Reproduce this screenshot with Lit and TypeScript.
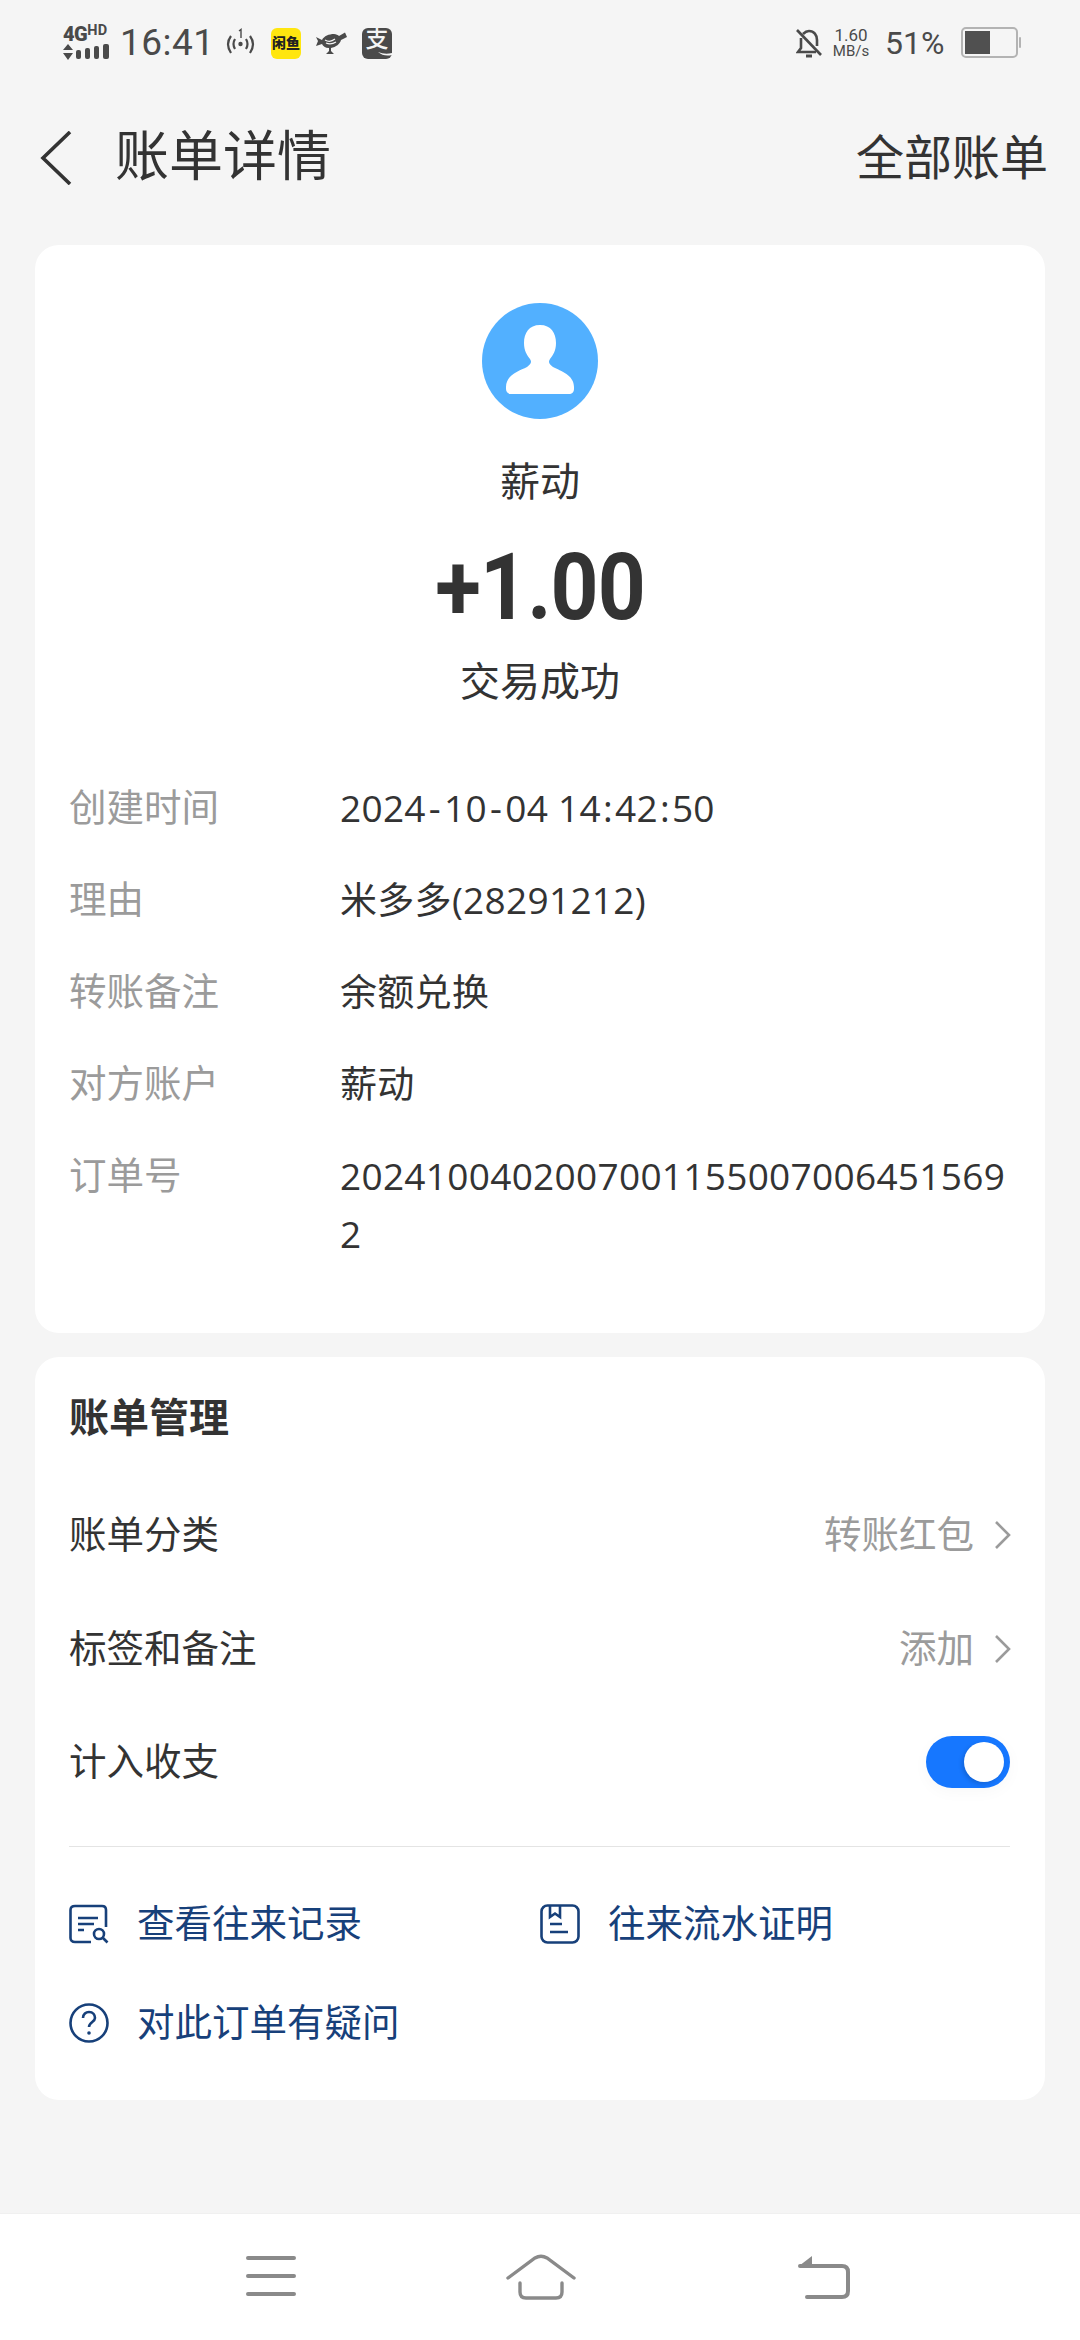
import { LitElement, html, css } from "lit";
import { customElement } from "lit/decorators.js";

const rows: [string, unknown][] = [
  ["创建时间", html`2024<span class="hy">-</span>10<span class="hy">-</span>04 14<span class="co">:</span>42<span class="co">:</span>50`],
  ["理由", "米多多(28291212)"],
  ["转账备注", "余额兑换"],
  ["对方账户", "薪动"],
  ["订单号", "20241004020070011550070064515692"],
];

const chevron = html`<svg class="chev" width="18" height="30" viewBox="0 0 18 30"><path d="M2 2 L15 15 L2 28" fill="none" stroke="#9b9b9b" stroke-width="2.6"/></svg>`;

@customElement("app-root")
export class AppRoot extends LitElement {
  static styles = css`
    :host { display: block; width: 1080px; height: 2340px; background: #f5f5f5; font-family: Roboto, "Noto Sans CJK SC", sans-serif; color: #333; overflow: hidden; }
    .page { display: flex; flex-direction: column; height: 2340px; }
    .status { height: 86px; display: flex; align-items: center; color: #4a4a4a; padding: 0 59px 0 63px; box-sizing: border-box; }
    .sigwrap { display: flex; flex-direction: column; width: 48px; height: 36px; margin-right: 9px; }
    .sigtop { display: flex; align-items: flex-start; height: 18px; line-height: 18px; font-weight: 700; color: #4a4a4a; }
    .sigtop b { font-size: 20px; letter-spacing: -0.5px; }
    .sigtop i { font-style: normal; font-size: 14.500px; line-height: 12px; font-weight: 700; letter-spacing: .3px; }
    .time { font-size: 37px; letter-spacing: 0.5px; width: 96px; line-height: 40px; }
    .wave { margin-left: 9px; }
    .yellow { margin-left: 15px; width: 30px; height: 31px; background: #ffe60f; border-radius: 6px; display: flex; align-items: center; justify-content: center; color: #222; font-size: 14px; line-height: 31px; font-weight: 900; white-space: nowrap; }
    .bird { margin-left: 15px; }
    .ali { position: relative; margin-left: 15px; width: 30px; height: 31px; background: #4a4a4a; border-radius: 6px; color: #f5f5f5; font-size: 23px; line-height: 24px; text-align: center; font-weight: 500; }
    .ali svg { position: absolute; left: 0; top: 0; }
    .grow { flex: 1; }
    .speed { display: flex; flex-direction: column; align-items: center; font-size: 15px; line-height: 15px; margin-left: 10px; width: 38px; }
    .speed .a { font-size: 17px; line-height: 17px; }
    .pct { font-size: 32px; margin-left: 15px; width: 64px; line-height: 34px; }
    .batt { margin-left: 12px; }
    .head { height: 159px; display: flex; align-items: flex-start; box-sizing: border-box; padding: 41px 32px 0 40px; }
    .head .back { margin-top: 4px; flex: none; }
    .head h1 { margin: 0 0 0 43px; font-size: 54px; line-height: 62px; font-weight: 400; color: #333; }
    .head .all { margin-left: auto; font-size: 48px; line-height: 62px; color: #333; margin-top: 1px; }
    .card { background: #fff; border-radius: 24px; margin: 0 35px; box-sizing: border-box; }
    .c1 { height: 1088px; padding: 58px 34px 0; }
    .avatar { display: block; margin: 0 auto; }
    .name { text-align: center; font-size: 40px; line-height: 50px; margin-top: 39px; color: #333; }
    .amtw { text-align: center; margin-top: 25px; line-height: 110px; height: 110px; }
    .amt { display: inline-block; font-size: 92px; line-height: 110px; font-weight: 700; color: #333; letter-spacing: -1px; transform: scaleX(.91); }
    .st { text-align: center; font-size: 40px; line-height: 50px; margin-top: 15px; color: #333; }
    .rows { margin-top: 71px; display: flex; flex-direction: column; gap: 34px; }
    .row { display: grid; grid-template-columns: 271px 670px; font-size: 37.500px; line-height: 58px; }
    .row .k { color: #9b9b9b; }
    .row .v { color: #333; word-break: break-all; font-family: "Open Sans", "Noto Sans CJK SC", sans-serif; font-size: 37px; letter-spacing: .3px; }
    .hy { margin: 0 3px; }
    .co { margin: 0 2px; }
    .c2 { margin-top: 24px; height: 743px; padding: 0 35px 0 34px; }
    .t2 { font-size: 40px; font-weight: 700; line-height: 60px; padding-top: 32px; color: #333; }
    .mrow { display: flex; align-items: center; justify-content: space-between; font-size: 37.500px; line-height: 58px; color: #333; }
    .mrow.r1 { margin-top: 57px; }
    .mrow.r2 { margin-top: 56px; }
    .mrow.r3 { margin-top: 55px; }
    .rt { display: flex; align-items: center; color: #9b9b9b; gap: 20px; margin-right: -2px; }
    .chev { display: block; }
    .sw { width: 84px; height: 52px; border-radius: 26px; background: #1677ff; display: flex; align-items: center; justify-content: flex-end; padding-right: 6px; box-sizing: border-box; box-shadow: 0 4px 16px rgba(0,0,0,.03); }
    .sw span { width: 40px; height: 40px; background: #fff; border-radius: 50%; box-shadow: -2px 2px 4px rgba(0,0,0,.15); }
    .div { height: 1px; background: #e4e4e4; margin-top: 55px; }
    .links { display: grid; grid-template-columns: 471px 1fr; row-gap: 41px; margin-top: 48px; }
    .lnk { display: flex; align-items: center; gap: 28px; font-size: 37.500px; line-height: 58px; color: #17407a; }
    .fill { flex: 1; }
    .nav { height: 127px; background: #fff; display: flex; align-items: flex-start; padding: 41px 0 0 246px; box-sizing: border-box; border-top: 1px solid #f0f0f0; }
    .nav .h { margin-left: 210px; margin-top: -1px; }
    .nav .b { margin-left: 222px; margin-top: -1px; }
  `;

  render() {
    return html`<div class="page">
      <div class="status">
        <div class="sigwrap">
          <div class="sigtop"><b>4G</b><i>HD</i></div>
          <svg width="48" height="18" viewBox="0 0 48 18" fill="#4a4a4a"><path d="M5 1 L10 7 H0 Z M5 17 L0 10 H10 Z"/><rect x="13" y="7" width="5" height="9" rx="2"/><rect x="22" y="5" width="5" height="11" rx="2"/><rect x="31" y="3" width="5" height="13" rx="2"/><rect x="40" y="1" width="6" height="15" rx="2"/></svg>
        </div>
        <div class="time">16:41</div>
        <svg class="wave" width="31" height="30" viewBox="0 0 31 30" fill="none" stroke="#4a4a4a" stroke-width="2.2"><path d="M6 8 Q0 16 6 25 M10 11 Q7 16 10 21 M25 8 Q31 16 25 25 M21 11 Q24 16 21 21"/><circle cx="15.500" cy="16" r="2.200" fill="#4a4a4a" stroke="none"/><path d="M14 3 L16 1.500 V10" stroke-width="1.400"/></svg>
        <div class="yellow">闲鱼</div>
        <svg class="bird" width="31" height="23" viewBox="0 0 31 23" fill="#4a4a4a"><path d="M0 5 L6 8 C8 4 13 2 18 2 C20 2 22 3 23 4 L29 0.500 L31 5 L25 8 C24 12 20 15 15 16 L15 19 L18 22 H10 L13 19 L13 16 C9 16 7 14 6 12 L0 14 L2 9 Z"/><path d="M9 8 Q14 11 19 7 M10 11 Q15 13 20 10" fill="none" stroke="#f5f5f5" stroke-width="1.200"/></svg>
        <div class="ali">支<svg width="30" height="31" viewBox="0 0 30 31"><path d="M16 24 Q23 27 30 25 V27 Q22 29 16 24 Z" fill="#f5f5f5"/></svg></div>
        <div class="grow"></div>
        <svg width="26" height="31" viewBox="0 0 26 31" fill="none" stroke="#4a4a4a" stroke-width="2.600"><path d="M1 2 L25 27"/><path d="M7 6 C9 4 11 3 13 3 C18 3 21 7 21 12 V18 M5 10 V20 L2 24 H20"/><path d="M10 28 H16" stroke-width="3"/></svg>
        <div class="speed"><span class="a">1.60</span><span>MB/s</span></div>
        <div class="pct">51%</div>
        <svg class="batt" width="60" height="32" viewBox="0 0 60 32"><rect x="1" y="1" width="55" height="29" rx="4" fill="none" stroke="#b3b3b3" stroke-width="2"/><rect x="4" y="4" width="25" height="23" fill="#505050"/><rect x="58" y="10" width="2" height="11" rx="1" fill="#b3b3b3"/></svg>
      </div>
      <div class="head">
        <svg class="back" width="32" height="54" viewBox="0 0 32 54"><path d="M30 1 L3 27 L30 53" fill="none" stroke="#333" stroke-width="3.600"/></svg>
        <h1>账单详情</h1>
        <div class="all">全部账单</div>
      </div>
      <div class="card c1">
        <svg class="avatar" width="116" height="116" viewBox="0 0 116 116"><circle cx="58" cy="58" r="58" fill="#52b0ff"/><path fill="#fff" d="M58 22 C69 22 74 30 74 40 C74 48 71 52 68 56 C66 59 67 61 71 64 C79 68 92 72 92 84 V86 C92 89 90 91 87 91 H29 C26 91 24 89 24 86 V84 C24 72 37 68 45 64 C49 61 50 59 48 56 C45 52 42 48 42 40 C42 30 47 22 58 22 Z"/></svg>
        <div class="name">薪动</div>
        <div class="amtw"><span class="amt">+1.00</span></div>
        <div class="st">交易成功</div>
        <div class="rows">
          ${rows.map(([k, v]) => html`<div class="row"><div class="k">${k}</div><div class="v">${v}</div></div>`)}
        </div>
      </div>
      <div class="card c2">
        <div class="t2">账单管理</div>
        <div class="mrow r1"><span>账单分类</span><span class="rt">转账红包 ${chevron}</span></div>
        <div class="mrow r2"><span>标签和备注</span><span class="rt">添加 ${chevron}</span></div>
        <div class="mrow r3"><span>计入收支</span><span class="sw"><span></span></span></div>
        <div class="div"></div>
        <div class="links">
          <div class="lnk"><svg width="40" height="40" viewBox="0 0 40 40" fill="none" stroke="#17407a" stroke-width="2.600"><path d="M22 38 H6 C3 38 1.500 36 1.500 34 V6 C1.500 3.500 3 2 6 2 H33 C35.500 2 37 3.500 37 6 V23"/><path d="M9 14 H29 M9 20 H25 M9 26 H15"/><circle cx="30" cy="30" r="5"/><path d="M34 34 L38.500 38.500"/></svg>查看往来记录</div>
          <div class="lnk"><svg width="40" height="40" viewBox="0 0 40 40" fill="none" stroke="#17407a" stroke-width="2.600"><rect x="1.500" y="1.500" width="37" height="37" rx="6"/><path d="M10 1.500 V13 L15 9.500 L20 13 V1.500 M10 20 H22 M10 28 H28"/></svg>往来流水证明</div>
          <div class="lnk"><svg width="40" height="40" viewBox="0 0 40 40" fill="none" stroke="#17407a" stroke-width="2.600"><circle cx="20" cy="20" r="18.500"/><path d="M14 15 C14 11 17 9 20 9 C24 9 26 12 26 15 C26 19 20 19 20 24"/><circle cx="20" cy="30" r="1.800" fill="#17407a" stroke="none"/></svg>对此订单有疑问</div>
        </div>
      </div>
      <div class="fill"></div>
      <div class="nav">
        <svg width="50" height="42" viewBox="0 0 50 42" stroke="#8a8a8a" stroke-width="4" stroke-linecap="round"><path d="M2 3 H48 M2 21 H48 M2 39 H48"/></svg>
        <svg class="h" width="70" height="46" viewBox="0 0 70 46" fill="none" stroke="#8a8a8a" stroke-width="3.400" stroke-linecap="round"><path d="M2 24 L29 4 Q35 0.500 41 4 L68 24"/><path d="M14 29 V38 Q14 44 20 44 H50 Q56 44 56 38 V29"/></svg>
        <svg class="b" width="52" height="46" viewBox="0 0 52 46" fill="none" stroke="#8a8a8a" stroke-width="4" stroke-linecap="round"><path d="M2 12 H44 Q50 12 50 18 V37 Q50 43 44 43 H9"/><path d="M1 12 L14 2 V12 Z" fill="#8a8a8a" stroke="none"/></svg>
      </div>
    </div>`;
  }
}
